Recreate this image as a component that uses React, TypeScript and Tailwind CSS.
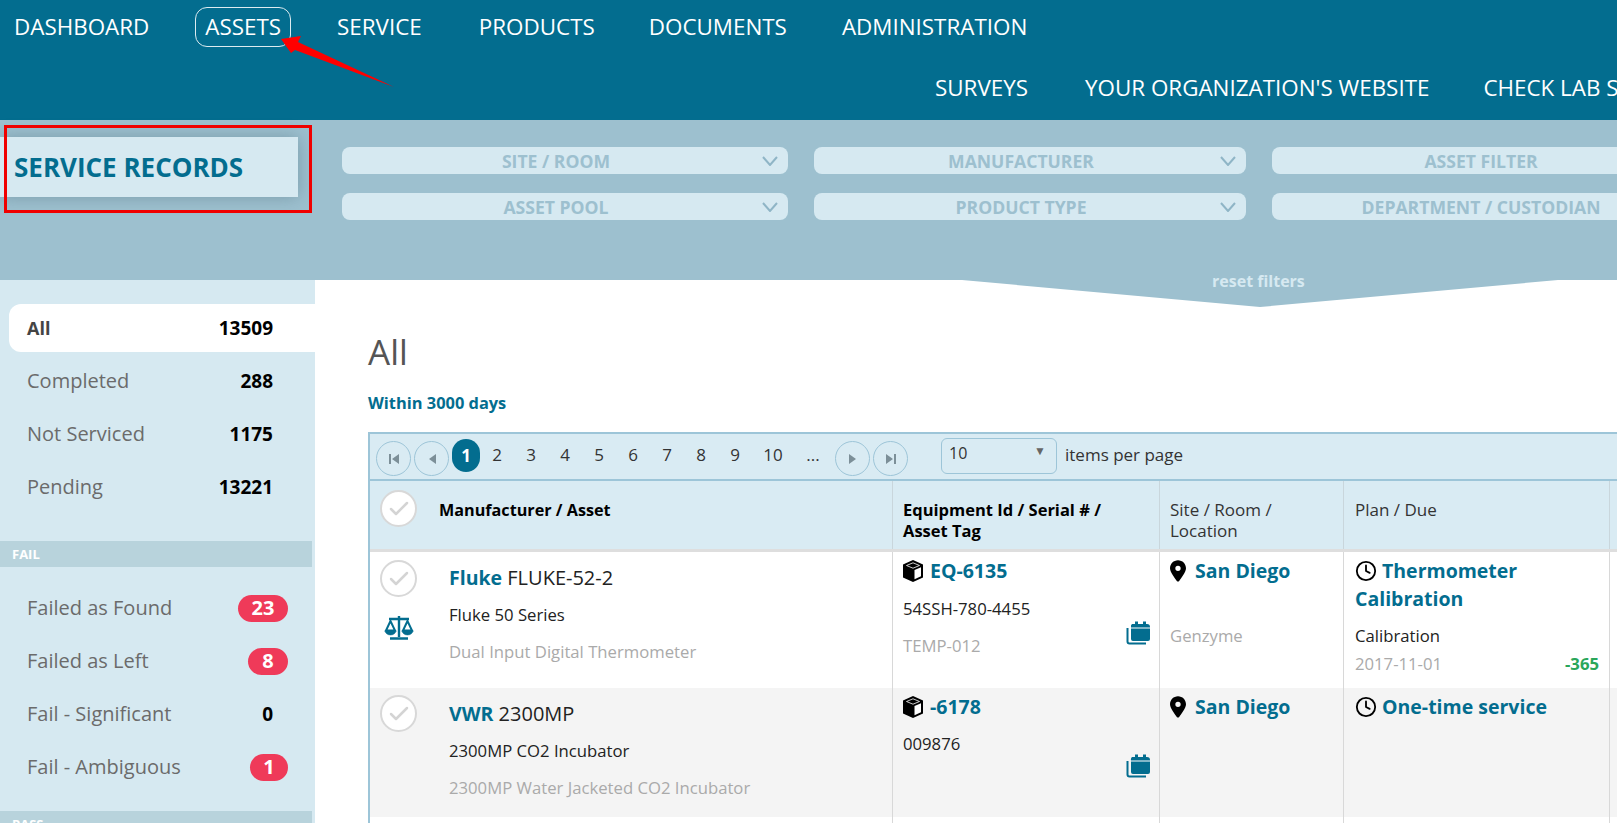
import { Check, Clock } from "lucide-react";
import { FaLocationDot } from "react-icons/fa6";

const navTop = [
  { label: "DASHBOARD", cls: "" },
  { label: "ASSETS", cls: "ml-[46px] mr-[46px] flex h-[40px] items-center rounded-xl border border-[#dcebf0] px-[9px]" },
  { label: "SERVICE", cls: "mr-[57px]" },
  { label: "PRODUCTS", cls: "mr-[54px]" },
  { label: "DOCUMENTS", cls: "mr-[55px]" },
  { label: "ADMINISTRATION", cls: "" },
];

const navBottom = [
  { label: "SURVEYS", cls: "mr-[57px]" },
  { label: "YOUR ORGANIZATION'S WEBSITE", cls: "mr-[54px]" },
  { label: "CHECK LAB STATUS", cls: "" },
];

const statusRows = [
  { label: "All", value: "13509", active: true },
  { label: "Completed", value: "288" },
  { label: "Not Serviced", value: "1175" },
  { label: "Pending", value: "13221" },
];

const failRows = [
  { label: "Failed as Found", value: "23", badge: "w-[50px]" },
  { label: "Failed as Left", value: "8", badge: "w-[40px]" },
  { label: "Fail - Significant", value: "0", badge: "" },
  { label: "Fail - Ambiguous", value: "1", badge: "w-[38px]" },
];

const pages = ["2", "3", "4", "5", "6", "7", "8", "9", "10", "..."];

const Filter = ({ label }: { label: string }) => (
  <div className="relative flex h-[27px] items-center justify-center rounded-lg bg-[#d6e9f1] pr-[18px] pt-[1px] text-[17.6px] font-bold text-[#9dc0cf]">
    {label}
    <svg viewBox="0 0 16 10" className="absolute right-[10px] top-[9px] h-[10px] w-[16px] fill-none stroke-[#8fb5c6]" strokeWidth="2">
      <path d="M1 1l7 8 7-8" />
    </svg>
  </div>
);

const RoundCheck = () => (
  <div className="flex h-[37px] w-[37px] items-center justify-center rounded-full border-2 border-[#d8d8d8] bg-white">
    <Check className="h-[24px] w-[24px] text-[#d4d4d4]" strokeWidth={2.5} />
  </div>
);

const PagerButton = ({ kind }: { kind: "first" | "prev" | "next" | "last" }) => (
  <div className="mt-[4px] flex h-[35px] w-[35px] shrink-0 items-center justify-center rounded-full border border-[#9dc5d8]">
    <svg viewBox="0 0 12 12" className="h-[12px] w-[12px] fill-[#7c8f98]">
      {kind === "first" && <path d="M1 1h2v10H1zM11 1v10L4 6z" />}
      {kind === "prev" && <path d="M10 1v10L3 6z" />}
      {kind === "next" && <path d="M2 1v10l7-5z" />}
      {kind === "last" && <path d="M9 1h2v10H9zM1 1v10l7-5z" />}
    </svg>
  </div>
);

const ScalesIcon = () => (
  <svg viewBox="0 0 30 25" className="h-[25px] w-[30px] fill-none stroke-[#036d8f]" strokeWidth="2.4">
    <path d="M15 1v21M6 23.500h18M5 4h20" />
    <path d="M6.500 6 2 15.500h9zM23.500 6 19 15.500h9z" strokeWidth="2" />
    <path d="M1 15.500a5.500 4.500 0 0 0 11 0zM18 15.500a5.500 4.500 0 0 0 11 0z" className="fill-[#036d8f]" strokeWidth="0.5" />
  </svg>
);

const CubeIcon = () => (
  <svg viewBox="0 0 20 22" className="h-[22px] w-[20px] shrink-0">
    <path d="M10 0 20 4.500v13L10 22 0 17.500v-13z" fill="#000" />
    <path d="M10 2.800 16.500 5.500 10 8.200 3.500 5.500z" fill="#000" stroke="#fff" strokeWidth="0.8" />
    <path d="M11.500 10 18 7.300v8.900l-6.500 3z" fill="#fff" />
  </svg>
);

const CalendarIcon = () => (
  <svg viewBox="0 0 24 24" className="h-[24px] w-[24px]">
    <path d="M1.500 7v13.500a2 2 0 0 0 2 2H20" fill="none" stroke="#036d8f" strokeWidth="2" />
    <path d="M6 3h15a3 3 0 0 1 3 3v12a2 2 0 0 1-2 2H7a2 2 0 0 1-2-2V6a3 3 0 0 1 1-3z" fill="#036d8f" />
    <path d="M9 0.500h3v4H9zM17 0.500h3v4h-3z" fill="#036d8f" />
    <path d="M5 7h19" stroke="#fff" strokeWidth="1" />
  </svg>
);

const SideRow = ({ label, value, badge, active }: { label: string; value: string; badge?: string; active?: boolean }) => (
  <div
    className={`mb-[5px] ml-[9px] flex h-[48px] items-center justify-between pl-[18px] pr-[42px] text-[20px] ${
      active ? "rounded-l-xl bg-white font-bold text-[#444]" : "text-[#6b6b6b]"
    }`}
  >
    <span className={active ? "text-[18px]" : ""}>{label}</span>
    {badge ? (
      <span className={`-mr-[20px] flex h-[27px] -translate-x-[5px] items-center justify-center rounded-full bg-[#ef3a59] text-[20px] font-bold text-white ${badge}`}>
        {value}
      </span>
    ) : (
      <span className="text-[19px] font-bold text-black">{value}</span>
    )}
  </div>
);

const SectionHead = ({ label }: { label: string }) => (
  <div className="flex h-[26px] w-[312px] items-center bg-[#b8d3dc] pl-[12px] pt-[2px] text-[13px] font-bold text-white">{label}</div>
);

export default function App() {
  return (
    <div className="relative flex h-[823px] w-[1617px] flex-col overflow-hidden bg-white font-['Open_Sans',sans-serif]">
      {/* top nav */}
      <div className="h-[120px] shrink-0 bg-[#036d8f] text-[22.4px] text-white">
        <div className="flex h-[53px] items-center pl-[14px]">
          {navTop.map((item) => (
            <span key={item.label} className={item.cls}>
              {item.label}
            </span>
          ))}
        </div>
        <div className="flex h-[67px] items-center whitespace-nowrap pl-[935px] pt-[3px]">
          {navBottom.map((item) => (
            <span key={item.label} className={`shrink-0 ${item.cls}`}>
              {item.label}
            </span>
          ))}
        </div>
      </div>

      {/* filters */}
      <div className="flex h-[160px] shrink-0 bg-[#9dc0cf]">
        <div className="mt-[17px] flex h-[60px] w-[298px] shrink-0 items-center bg-[#d6e9f1] pl-[14px] text-[26px] font-bold text-[#036d8f] shadow-[0_0_16px_rgba(70,100,115,0.4)]">
          SERVICE RECORDS
        </div>
        <div className="ml-[44px] grid shrink-0 grid-cols-[446px_432px_436px] grid-rows-[27px_27px] gap-x-[26px] gap-y-[19px] pt-[27px]">
          <Filter label="SITE / ROOM" />
          <Filter label="MANUFACTURER" />
          <Filter label="ASSET FILTER" />
          <Filter label="ASSET POOL" />
          <Filter label="PRODUCT TYPE" />
          <Filter label="DEPARTMENT / CUSTODIAN" />
        </div>
      </div>

      <div className="flex min-h-0 flex-1">
        {/* sidebar */}
        <div className="w-[315px] shrink-0 bg-[#d6e9f1] pt-[24px]">
          {statusRows.map((r) => (
            <SideRow key={r.label} {...r} />
          ))}
          <div className="h-[25px]" />
          <SectionHead label="FAIL" />
          <div className="h-[17px]" />
          {failRows.map((r) => (
            <SideRow key={r.label} label={r.label} value={r.value} badge={r.badge} />
          ))}
          <div className="h-[15px]" />
          <SectionHead label="PASS" />
        </div>

        {/* main */}
        <div className="min-w-0 flex-1 pl-[53px] pt-[50px]">
          <div className="text-[35px] leading-[44px] text-[#555]">All</div>
          <div className="mt-[17px] text-[16.4px] font-bold leading-[24px] text-[#036d8f]">Within 3000 days</div>

          <div className="mt-[17px] w-[1300px] border-l-2 border-t-2 border-[#9dc5d8]">
            {/* pager */}
            <div className="flex h-[47px] items-center border-b-2 border-[#9dc5d8] bg-[#d9ebf3] pl-[6px] text-[17px] text-[#333]">
              <PagerButton kind="first" />
              <div className="w-[3px]" />
              <PagerButton kind="prev" />
              <div className="ml-[3px] -mt-[2px] flex h-[33px] w-[28px] items-center justify-center rounded-full bg-[#036d8f] font-bold text-white">1</div>
              <div className="-mt-[3px] flex">
                {pages.map((p) => (
                  <span key={p} className={`flex justify-center ${p === "10" ? "w-[42px]" : p === "..." ? "w-[38px]" : "w-[34px]"}`}>
                    {p}
                  </span>
                ))}
              </div>
              <div className="w-[3px]" />
              <PagerButton kind="next" />
              <div className="w-[3px]" />
              <PagerButton kind="last" />
              <div className="ml-[33px] -mt-[2px] flex h-[36px] w-[116px] items-start justify-between rounded-md border border-[#9dc5d8] px-[7px] pt-[2px] text-[16px]">
                <span>10</span>
                <span className="mr-[3px] mt-[1px] text-[12px] text-[#666]">▼</span>
              </div>
              <span className="ml-[8px] -mt-[3px]">items per page</span>
            </div>

            {/* head */}
            <div className="flex h-[71px] border-b-[3px] border-[#dedede] bg-[#d9ebf3] text-[17px] leading-[21px] text-[#333]">
              <div className="flex w-[523px] shrink-0 items-start border-r border-[#c9d6dc] pl-[10px] pt-[9px]">
                <RoundCheck />
                <span className="ml-[22px] mt-[10px] text-[16.2px] font-bold text-black">Manufacturer / Asset</span>
              </div>
              <div className="w-[267px] shrink-0 border-r border-[#c9d6dc] pl-[10px] pt-[18px] text-[16.5px] font-bold text-black">
                Equipment Id / Serial # /
                <br />
                Asset Tag
              </div>
              <div className="w-[184px] shrink-0 border-r border-[#c9d6dc] pl-[10px] pt-[18px]">
                Site / Room /
                <br />
                Location
              </div>
              <div className="w-[266px] shrink-0 border-r border-[#c9d6dc] pl-[11px] pt-[18px]">Plan / Due</div>
            </div>

            {/* row 1 */}
            <div className="flex h-[136px] text-[16.7px]">
              <div className="flex w-[523px] shrink-0 border-r border-[#d8d8d8] pl-[10px] pt-[8px]">
                <div className="flex flex-col items-center">
                  <RoundCheck />
                  <div className="mt-[18px]">
                    <ScalesIcon />
                  </div>
                </div>
                <div className="ml-[32px] pt-[7px]">
                  <div className="text-[20px] leading-[22px] text-[#222]">
                    <span className="text-[19.5px] font-bold text-[#036d8f]">Fluke</span> FLUKE-52-2
                  </div>
                  <div className="mt-[15px] leading-[22px] text-[#222]">Fluke 50 Series</div>
                  <div className="mt-[15px] leading-[22px] text-[#aaa]">Dual Input Digital Thermometer</div>
                </div>
              </div>
              <div className="relative w-[267px] shrink-0 border-r border-[#d8d8d8] pl-[10px] pt-[8px]">
                <div className="flex items-center gap-[7px] text-[19.5px] font-bold leading-[22px] text-[#036d8f]">
                  <CubeIcon />
                  EQ-6135
                </div>
                <div className="mt-[16px] leading-[22px] text-[#222]">54SSH-780-4455</div>
                <div className="mt-[15px] leading-[22px] text-[#aaa]">TEMP-012</div>
                <div className="absolute right-[9px] top-[69px]">
                  <CalendarIcon />
                </div>
              </div>
              <div className="w-[184px] shrink-0 border-r border-[#d8d8d8] pl-[10px] pt-[8px]">
                <div className="flex items-center gap-[9px] text-[19.5px] font-bold leading-[22px] text-[#036d8f]">
                  <FaLocationDot className="h-[22px] w-[16px] text-black" />
                  San Diego
                </div>
                <div className="mt-[43px] leading-[22px] text-[#aaa]">Genzyme</div>
              </div>
              <div className="w-[266px] shrink-0 border-r border-[#d8d8d8] pl-[11px] pr-[10px] pt-[5px]">
                <div className="text-[19.5px] font-bold leading-[28px] text-[#036d8f]">
                  <Clock className="-mt-[3px] mr-[5px] inline h-[22px] w-[22px] text-black" strokeWidth={2} />
                  Thermometer Calibration
                </div>
                <div className="mt-[11px] leading-[24px] text-[#222]">Calibration</div>
                <div className="mt-[5px] flex justify-between leading-[22px]">
                  <span className="text-[#aaa]">2017-11-01</span>
                  <span className="font-bold text-[#2aa65a]">-365</span>
                </div>
              </div>
            </div>

            {/* row 2 */}
            <div className="flex h-[129px] bg-[#f4f4f4] text-[16.7px]">
              <div className="flex w-[523px] shrink-0 border-r border-[#d8d8d8] pl-[10px] pt-[7px]">
                <RoundCheck />
                <div className="ml-[32px] pt-[8px]">
                  <div className="text-[20px] leading-[22px] text-[#222]">
                    <span className="text-[19.5px] font-bold text-[#036d8f]">VWR</span> 2300MP
                  </div>
                  <div className="mt-[15px] leading-[22px] text-[#222]">2300MP CO2 Incubator</div>
                  <div className="mt-[15px] leading-[22px] text-[#aaa]">2300MP Water Jacketed CO2 Incubator</div>
                </div>
              </div>
              <div className="relative w-[267px] shrink-0 border-r border-[#d8d8d8] pl-[10px] pt-[8px]">
                <div className="flex items-center gap-[7px] text-[19.5px] font-bold leading-[22px] text-[#036d8f]">
                  <CubeIcon />
                  -6178
                </div>
                <div className="mt-[15px] leading-[22px] text-[#222]">009876</div>
                <div className="absolute right-[9px] top-[66px]">
                  <CalendarIcon />
                </div>
              </div>
              <div className="w-[184px] shrink-0 border-r border-[#d8d8d8] pl-[10px] pt-[8px]">
                <div className="flex items-center gap-[9px] text-[19.5px] font-bold leading-[22px] text-[#036d8f]">
                  <FaLocationDot className="h-[22px] w-[16px] text-black" />
                  San Diego
                </div>
              </div>
              <div className="w-[266px] shrink-0 border-r border-[#d8d8d8] pl-[11px] pt-[8px]">
                <div className="flex items-center gap-[5px] text-[19.5px] font-bold leading-[22px] text-[#036d8f]">
                  <Clock className="h-[22px] w-[22px] text-black" strokeWidth={2} />
                  One-time service
                </div>
              </div>
            </div>

            {/* row 3, cut off by the window */}
            <div className="flex h-[40px]">
              <div className="w-[523px] shrink-0 border-r border-[#d8d8d8]" />
              <div className="w-[267px] shrink-0 border-r border-[#d8d8d8]" />
              <div className="w-[184px] shrink-0 border-r border-[#d8d8d8]" />
              <div className="w-[266px] shrink-0 border-r border-[#d8d8d8]" />
            </div>
          </div>
        </div>
      </div>

      {/* reset filters tab */}
      <div className="absolute left-[962px] top-[280px] h-[27px] w-[596px] bg-[#9dc0cf] [clip-path:polygon(0_0,100%_0,50%_100%)]" />
      <span className="absolute left-[1212px] top-[270px] text-[16px] font-bold leading-[22px] text-[#d6e9f1]">reset filters</span>

      {/* annotations drawn on the screenshot */}
      <div className="absolute left-[4px] top-[125px] h-[88px] w-[308px] border-[3px] border-[#f00000]" />
      <svg className="absolute left-0 top-0 h-[100px] w-[400px]" viewBox="0 0 400 100">
        <path d="M281 39 301 36 298 42 394 87 295 50 291 53z" fill="#ff0000" />
      </svg>
    </div>
  );
}
